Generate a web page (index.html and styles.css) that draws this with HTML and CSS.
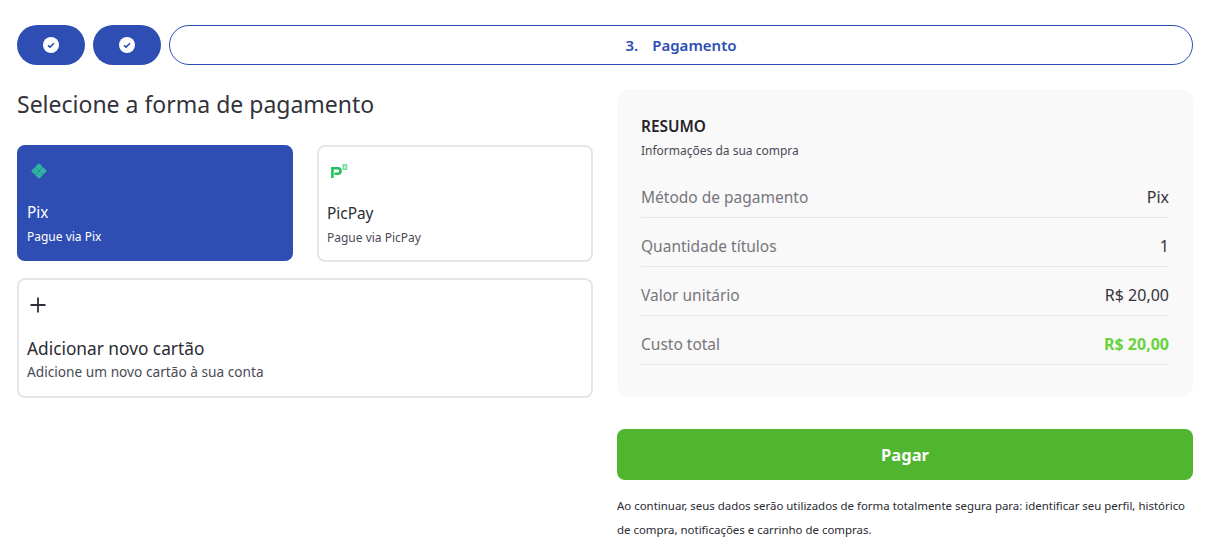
FILE: index.html
```html
<!DOCTYPE html>
<html lang="pt-BR">
<head>
<meta charset="utf-8">
<title>Pagamento</title>
<link rel="stylesheet" href="styles.css">
</head>
<body>
<div class="page">
  <nav class="steps">
    <div class="step done"><svg class="check" viewBox="0 0 16 16" width="16" height="16"><circle cx="8" cy="8" r="8" fill="#fff"/><path d="M5 8.3 7 10.1 11 6.2" fill="none" stroke="#2e4eb4" stroke-width="1.6"/></svg></div>
    <div class="step done"><svg class="check" viewBox="0 0 16 16" width="16" height="16"><circle cx="8" cy="8" r="8" fill="#fff"/><path d="M5 8.3 7 10.1 11 6.2" fill="none" stroke="#2e4eb4" stroke-width="1.6"/></svg></div>
    <div class="step current"><span>3.</span><span>Pagamento</span></div>
  </nav>
  <main class="columns">
    <section class="left">
      <h1 class="title">Selecione a forma de pagamento</h1>
      <div class="methods">
        <div class="card selected">
          <svg class="icon" viewBox="0 0 16 16" width="16" height="16"><g fill="#32b3a0"><rect x="5.2" y="1.2" width="5.6" height="5.6" rx="1" transform="rotate(45 8 4)"/><rect x="5.2" y="9.2" width="5.6" height="5.6" rx="1" transform="rotate(45 8 12)"/><rect x="1.2" y="5.2" width="5.6" height="5.6" rx="1" transform="rotate(45 4 8)"/><rect x="9.2" y="5.2" width="5.6" height="5.6" rx="1" transform="rotate(45 12 8)"/></g></svg>
          <div class="name">Pix</div>
          <div class="desc">Pague via Pix</div>
        </div>
        <div class="card">
          <svg class="icon" viewBox="0 0 18 16" width="18" height="16"><path d="M1.4 15V5.3h5.4a2.7 2.7 0 0 1 0 5.4H3.4" fill="none" stroke="#21c25e" stroke-width="2.6"/><rect x="12.2" y="1.7" width="3.4" height="4.6" fill="#c4f0d4" stroke="#6fdc98" stroke-width="1.4"/></svg>
          <div class="name">PicPay</div>
          <div class="desc">Pague via PicPay</div>
        </div>
        <div class="card wide">
          <svg class="icon" viewBox="0 0 16 16" width="16" height="16"><path d="M8 .5v15M.5 8h15" fill="none" stroke="#2b2f38" stroke-width="1.8"/></svg>
          <div class="name">Adicionar novo cartão</div>
          <div class="desc">Adicione um novo cartão à sua conta</div>
        </div>
      </div>
    </section>
    <aside class="right">
      <div class="summary">
        <h2 class="sum-title">RESUMO</h2>
        <p class="sum-sub">Informações da sua compra</p>
        <div class="row"><span>Método de pagamento</span><span class="val">Pix</span></div>
        <div class="row"><span>Quantidade títulos</span><span class="val">1</span></div>
        <div class="row"><span>Valor unitário</span><span class="val">R$ 20,00</span></div>
        <div class="row"><span>Custo total</span><span class="val total">R$ 20,00</span></div>
      </div>
      <button class="pay">Pagar</button>
      <p class="legal">Ao continuar, seus dados serão utilizados de forma totalmente segura para: identificar seu perfil, histórico de compra, notificações e carrinho de compras.</p>
    </aside>
  </main>
</div>
</body>
</html>
```
FILE: styles.css
```css
* { box-sizing: border-box; }
html, body { margin: 0; background: #fff; }
body { font-family: "Noto Sans", "Open Sans", sans-serif; color: #2b2b33; }
.page { padding: 25px 25px 0 17px; width: 1218px; height: 551px; overflow: hidden; }
.steps { display: flex; gap: 8px; height: 40px; }
.step { height: 40px; border-radius: 20px; display: flex; align-items: center; justify-content: center; }
.step.done { width: 68px; background: #2e4eb4; }
.step.current { flex: 1; border: 1px solid #2e4eb4; color: #2e4eb4; font-size: 15px; font-weight: 600; gap: 14px; }
.columns { display: flex; gap: 24px; margin-top: 24px; }
.left { width: 576px; }
.right { width: 576px; }
.title { margin: -1px 0 0; font-size: 23px; font-weight: 400; line-height: 32px; height: 32px; color: #33333b; }
.methods { display: grid; grid-template-columns: 276px 276px; gap: 17px 24px; margin-top: 25px; }
.card { height: 117px; border: 2px solid #e6e6e6; border-radius: 8px; padding: 16px 8px 0; display: flex; flex-direction: column; }
.card.selected { background: #2e4eb4; border-color: #2e4eb4; color: #fff; height: 116px; }
.card.wide { grid-column: 1 / 3; height: 120px; margin-top: -1px; }
.icon { display: block; height: 16px; margin-left: 4px; flex: none; }
.name { font-size: 15.4px; line-height: 20px; margin-top: 25px; }
.desc { font-size: 12px; line-height: 16px; margin-top: 6px; color: #4a4a55; }
.card.selected .name { margin-top: 24px; }
.selected .desc { color: #fff; }
.wide .icon { margin: 1px 0 0 3px; }
.wide .name { font-size: 17.3px; margin-top: 26px; }
.wide .desc { margin-top: 5px; font-size: 13.7px; }
.summary { background: #f9f9f9; border-radius: 12px; height: 308px; padding: 28px 24px 0; }
.sum-title { margin: 0; font-size: 15.4px; font-weight: 600; line-height: 20px; color: #25222a; }
.sum-sub { margin: 4px 0 0; font-size: 12px; line-height: 20px; color: #4a4a55; }
.row { display: flex; justify-content: space-between; align-items: center; height: 49px; padding-top: 8px; border-bottom: 1px solid #e6e6ee; font-size: 15.5px; color: #77767c; }
.row:first-of-type { margin-top: 8px; }
.val { color: #35333a; font-size: 16px; }
.val.total { color: #6ad13f; font-weight: 700; }
.pay { display: block; width: 100%; height: 51px; margin-top: 32px; border: 0; border-radius: 8px; background: #50b52f; color: #fff; font: 700 16.5px "Noto Sans", sans-serif; }
.legal { margin: 14px 0 0; font-size: 11.45px; line-height: 24px; color: #2b2b33; }
```
